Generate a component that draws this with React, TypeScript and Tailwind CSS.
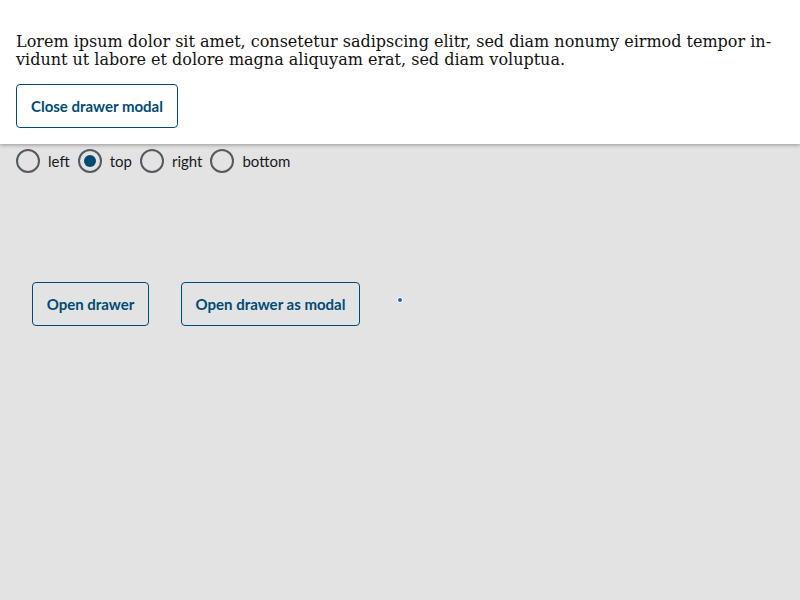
import React, { useState } from 'react';

const sans = { fontFamily: 'Lato, "Open Sans", sans-serif' };

const App: React.FC = () => {
  const [position, setPosition] = useState('top');
  const options = ['left', 'top', 'right', 'bottom'];

  return (
    <div className="min-h-[600px] w-[800px] bg-[#e3e3e3] relative overflow-hidden">
      {/* Page content */}
      <div className="pt-[149px] px-4 font-['Lato',sans-serif]">
        <div className="flex items-center">
          {options.map((opt) => (
            <label key={opt} className="flex items-center mr-2 cursor-pointer">
              <span
                onClick={() => setPosition(opt)}
                className="w-6 h-6 rounded-full border-2 border-[#555a5f] flex items-center justify-center bg-transparent"
              >
                {position === opt && <span className="w-3 h-3 rounded-full bg-[#004b76]" />}
              </span>
              <span className="ml-2 text-[15px] text-[#1a1a1a]">{opt}</span>
            </label>
          ))}
        </div>

        <div className="flex items-start gap-8 mt-[109px] ml-4">
          <button className="h-11 w-[117px] rounded border border-[#004b76] text-[#004b76] font-bold text-[15px]">
            Open drawer
          </button>
          <button className="h-11 w-[179px] rounded border border-[#004b76] text-[#004b76] font-bold text-[15px]">
            Open drawer as modal
          </button>
          <span className="mt-[16px] ml-[6px] w-[4px] h-[4px] rounded-full bg-[#1a5fe0] ring-1 ring-white/70" />
        </div>
      </div>

      {/* Drawer (top) */}
      <div className="absolute top-0 left-0 right-0 h-[144px] bg-white shadow-[0_1px_4px_rgba(0,0,0,0.35)] px-4 pt-[33px]">
        <p className="font-['DejaVu_Serif',serif] text-[16px] leading-[18px] text-[#111]">
          Lorem ipsum dolor sit amet, consetetur sadipscing elitr, sed diam nonumy eirmod tempor in{'\u00AD'}vidunt ut labore et dolore magna aliquyam erat, sed diam voluptua.
        </p>
        <button
          style={sans}
          className="mt-[15px] h-11 px-[14px] rounded border border-[#004b76] text-[#004b76] font-bold text-[15px] bg-white"
        >
          Close drawer modal
        </button>
      </div>
    </div>
  );
};

export default App;
